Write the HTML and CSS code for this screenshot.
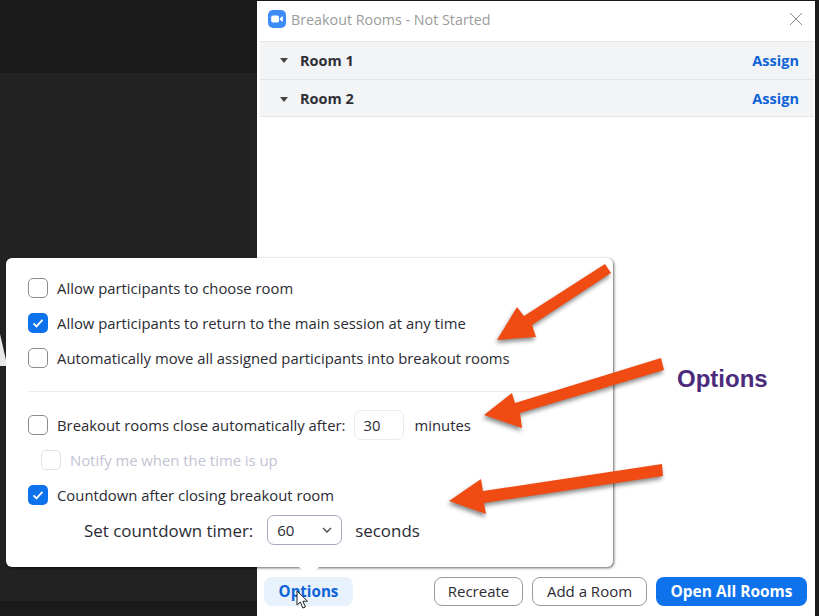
FILE: index.html
```html
<!DOCTYPE html>
<html lang="en">
<head>
  <meta charset="UTF-8">
  <title>Breakout Rooms - Not Started</title>
  <link rel="stylesheet" href="styles.css">
</head>
<body>
  <div class="backdrop">
    <div class="band band-top"></div>
    <div class="band band-mid"></div>
    <div class="band band-bottom"></div>
  </div>

  <div class="window">
    <div class="title-bar">
      <svg class="app-icon" width="18" height="18" viewBox="0 0 18 18">
        <rect width="18" height="18" rx="5" fill="#3d8bf8"/>
        <rect x="3.2" y="5.6" width="7.8" height="6.8" rx="1.6" fill="#fff"/>
        <path d="M11.8 8.2l3-2.2v6l-3-2.2z" fill="#fff"/>
      </svg>
      <span class="title-text">Breakout Rooms - Not Started</span>
      <svg class="close-icon" width="14" height="14" viewBox="0 0 14 14">
        <path d="M1 1l12 12M13 1L1 13" stroke="#8a8a8a" stroke-width="1" fill="none"/>
      </svg>
    </div>
    <div class="room-list">
      <div class="room-row">
        <span class="caret"></span>
        <span class="room-name">Room 1</span>
        <span class="assign">Assign</span>
      </div>
      <div class="room-row">
        <span class="caret"></span>
        <span class="room-name">Room 2</span>
        <span class="assign">Assign</span>
      </div>
    </div>
    <div class="footer">
      <button class="btn btn-options">Options</button>
      <div class="footer-right">
        <button class="btn btn-plain btn-recreate">Recreate</button>
        <button class="btn btn-plain btn-add">Add a Room</button>
        <button class="btn btn-primary">Open All Rooms</button>
      </div>
    </div>
  </div>

  <!-- options popover -->
  <div class="popover">
    <div class="opt-row">
      <span class="check"></span>
      <span>Allow participants to choose room</span>
    </div>
    <div class="opt-row">
      <span class="check checked">
        <svg width="20" height="20" viewBox="0 0 20 20"><path d="M5.5 10.4l3 3 6-6.6" stroke="#fff" stroke-width="1.8" fill="none"/></svg>
      </span>
      <span>Allow participants to return to the main session at any time</span>
    </div>
    <div class="opt-row">
      <span class="check"></span>
      <span>Automatically move all assigned participants into breakout rooms</span>
    </div>
    <div class="divider"></div>
    <div class="opt-row">
      <span class="check"></span>
      <span>Breakout rooms close automatically after:</span>
      <span class="num-input">30</span>
      <span class="unit">minutes</span>
    </div>
    <div class="opt-row opt-disabled">
      <span class="check"></span>
      <span>Notify me when the time is up</span>
    </div>
    <div class="opt-row">
      <span class="check checked">
        <svg width="20" height="20" viewBox="0 0 20 20"><path d="M5.5 10.4l3 3 6-6.6" stroke="#fff" stroke-width="1.8" fill="none"/></svg>
      </span>
      <span>Countdown after closing breakout room</span>
    </div>
    <div class="opt-row opt-timer">
      <span>Set countdown timer:</span>
      <span class="select">
        <span>60</span>
        <svg width="10" height="6" viewBox="0 0 10 6"><path d="M1 1l4 4 4-4" stroke="#444" stroke-width="1.3" fill="none"/></svg>
      </span>
      <span class="unit-seconds">seconds</span>
    </div>
  </div>

  <!-- annotations drawn on top of the screenshot -->
  <svg class="arrows" width="819" height="616" viewBox="0 0 819 616">
    <polygon points="605,264 611,273 532,325 536,337 497,340 517,307 524,316" fill="#f04b13"/>
    <polygon points="661,358 664,370 520,413 522,428 484,415 512,393 515,403" fill="#f04b13"/>
    <polygon points="662,464 663,476 484,503 486,514 449,501 481,479 483,491" fill="#f04b13"/>
  </svg>
  <div class="note">Options</div>
  <svg class="stray" width="7" height="40" viewBox="0 0 7 40"><path d="M0 4l6 26v6H0z" fill="#e8e8e8"/></svg>
  <svg class="cursor" width="13" height="20" viewBox="0 0 13 20">
    <path d="M1 1v14l3.400-3 2.400 6 2.600-1-2.500-5.800H11.500z" fill="#fff" stroke="#222" stroke-width="1"/>
  </svg>
</body>
</html>
```

FILE: styles.css
```css
html, body {
  margin: 0;
  padding: 0;
  height: 100%;
}
body {
  position: relative;
  width: 819px;
  height: 616px;
  overflow: hidden;
  display: flex;
  padding-top: 1px;
  box-sizing: border-box;
  background: #1a1a1a;
  font-family: "Open Sans", "Noto Sans", sans-serif;
  color: #2b2b33;
}
.backdrop {
  width: 257px;
  display: flex;
  flex-direction: column;
  flex-shrink: 0;
}
.band-top { height: 72px; background: #1a1a1a; }
.band-mid { flex: 1; background: #222222; }
.band-bottom { height: 15px; background: #1a1a1a; }

.window {
  width: 558px;
  flex-shrink: 0;
  display: flex;
  flex-direction: column;
  background: #fff;
}
.title-bar {
  height: 40px;
  box-sizing: border-box;
  display: flex;
  align-items: center;
  padding: 0 12px 4px 11px;
}
.app-icon { flex-shrink: 0; margin-right: 5px; }
.title-text {
  flex: 1;
  font-size: 14.300px;
  color: #9c9c9c;
}
.close-icon { margin-right: 0; }
.room-list {
  margin: 0 1px 0 3px;
}
.room-row {
  height: 38px;
  box-sizing: border-box;
  display: flex;
  align-items: center;
  padding: 0 15px 0 20px;
  background: #f3f4f6;
  border-top: 1px solid #e4e5e7;
}
.room-row:last-child {
  padding-top: 2px;
  border-bottom: 1px solid #e4e5e7;
}
.caret {
  width: 0;
  height: 0;
  border-left: 4px solid transparent;
  border-right: 4px solid transparent;
  border-top: 5px solid #444;
  margin-right: 12px;
}
.room-name {
  flex: 1;
  font-size: 14.500px;
  line-height: 20px;
  font-weight: 700;
  color: #2f2f36;
}
.assign {
  font-size: 14.500px;
  line-height: 20px;
  letter-spacing: 0.05px;
  font-weight: 700;
  color: #0e63d8;
}
.footer {
  margin-top: auto;
  display: flex;
  align-items: center;
  justify-content: space-between;
  padding: 0 8px 10px 7px;
}
.footer-right {
  display: flex;
  gap: 9px;
}
.btn {
  height: 29px;
  box-sizing: border-box;
  border-radius: 8px;
  border: 1px solid transparent;
  padding: 0 0 2px;
  font-family: inherit;
  font-size: 15px;
}
.btn-options {
  width: 89px;
  background: #e8f2fd;
  color: #0e63d8;
  font-size: 15.200px;
  font-weight: 700;
}
.btn-plain {
  background: #fff;
  border-color: #9a9a9f;
  color: #2b2b33;
}
.btn-recreate { width: 89px; }
.btn-add { width: 115px; }
.btn-primary {
  width: 151px;
  background: #0e72ed;
  color: #fff;
  font-size: 15.500px;
  font-weight: 700;
}

/* options popover */
.popover {
  position: absolute;
  left: 6px;
  top: 258px;
  width: 607px;
  height: 309px;
  box-sizing: border-box;
  padding: 12.5px 22px 0;
  background: #fff;
  border-radius: 6px;
  box-shadow: 1px 1px 3px rgba(0, 0, 0, 0.6);
  font-size: 14.850px;
}
.popover::after {
  content: "";
  position: absolute;
  left: 293px;
  top: 100%;
  border-left: 10px solid transparent;
  border-right: 10px solid transparent;
  border-top: 10px solid #fff;
}
.opt-row {
  height: 35px;
  display: flex;
  align-items: center;
}
.check {
  width: 20px;
  height: 20px;
  box-sizing: border-box;
  border: 1.5px solid #8b8b90;
  border-radius: 5px;
  margin-right: 9px;
  flex-shrink: 0;
}
.check.checked {
  background: #0e72ed;
  border: 0;
}
.check svg { display: block; }
.divider {
  height: 1px;
  background: #ececee;
  margin: 15px 0 16px;
}
.num-input {
  width: 50px;
  height: 30px;
  box-sizing: border-box;
  margin-left: 9px;
  padding-left: 8px;
  display: flex;
  align-items: center;
  border: 1px solid #ececee;
  border-radius: 7px;
}
.unit { margin-left: 10px; }
.opt-disabled {
  margin-left: 13px;
  color: #c3c4d4;
}
.opt-disabled .check { border-color: #e0e0e8; }
.opt-timer {
  padding-left: 56px;
  font-size: 16.900px;
}
.select {
  width: 75px;
  height: 30px;
  box-sizing: border-box;
  margin-left: 14px;
  padding: 0 9px;
  display: flex;
  align-items: center;
  justify-content: space-between;
  border: 1px solid #a9a6bd;
  border-radius: 7px;
  font-size: 15px;
}
.unit-seconds { margin-left: 13px; }

.arrows {
  position: absolute;
  left: 0;
  top: 0;
  filter: drop-shadow(-1px 3px 2px rgba(0, 0, 0, 0.45));
}
.note {
  position: absolute;
  left: 677px;
  top: 364px;
  font-family: "Liberation Sans", Arial, sans-serif;
  font-size: 24px;
  font-weight: 700;
  line-height: 30px;
  color: #4b2a7b;
}
.stray {
  position: absolute;
  left: 0;
  top: 330px;
}
.cursor {
  position: absolute;
  left: 296px;
  top: 590px;
}
```
